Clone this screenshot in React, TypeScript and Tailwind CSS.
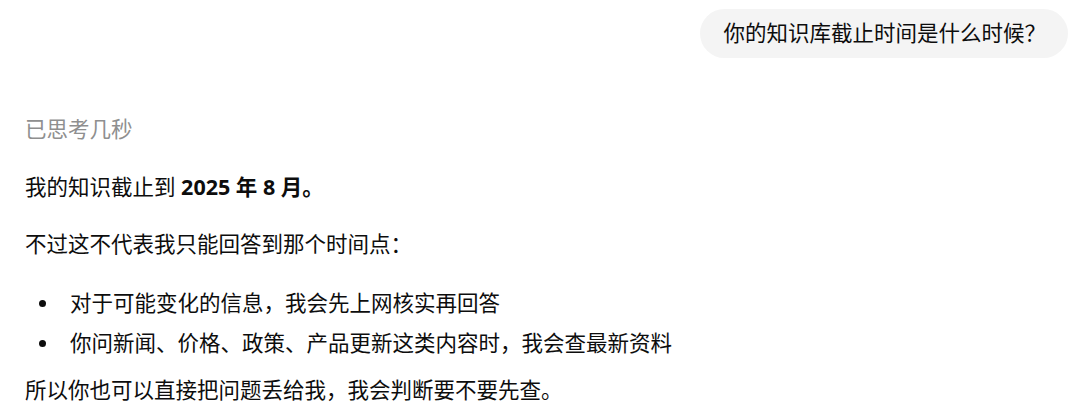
export default function App() {
  const font = { fontFamily: '"Noto Sans", "Noto Sans CJK SC", sans-serif' };
  const bullets = [
    "对于可能变化的信息，我会先上网核实再回答",
    "你问新闻、价格、政策、产品更新这类内容时，我会查最新资料",
  ];

  return (
    <div className="w-[1080px] h-[415px] bg-white overflow-hidden text-[#0d0d0d]" style={font}>
      <div className="flex justify-end pt-[9px] pr-[12px]">
        <div className="h-[49px] flex items-center pl-[23px] pr-[22px] rounded-full bg-[#f4f4f4] text-[21.5px]">
          你的知识库截止时间是什么时候？
        </div>
      </div>

      <div className="pl-[25px] text-[21.5px]">
        <div className="mt-[57px] leading-[28px] text-[#8f8f8f]">已思考几秒</div>

        <p className="mt-[30px] leading-[28px]">
          我的知识截止到{" "}
          <strong className="font-bold font-['Open_Sans','Noto_Sans_CJK_SC',sans-serif]">2025 年 8 月。</strong>
        </p>

        <p className="mt-[29px] leading-[28px]">不过这不代表我只能回答到那个时间点：</p>

        <ul className="mt-[25px]">
          {bullets.map((b) => (
            <li key={b} className="flex items-center h-[40px]">
              <span className="w-[7px] h-[7px] rounded-full bg-[#0d0d0d] ml-[14px] mr-[24px]" />
              {b}
            </li>
          ))}
        </ul>

        <p className="mt-[13px] leading-[28px]">所以你也可以直接把问题丢给我，我会判断要不要先查。</p>
      </div>
    </div>
  );
}
